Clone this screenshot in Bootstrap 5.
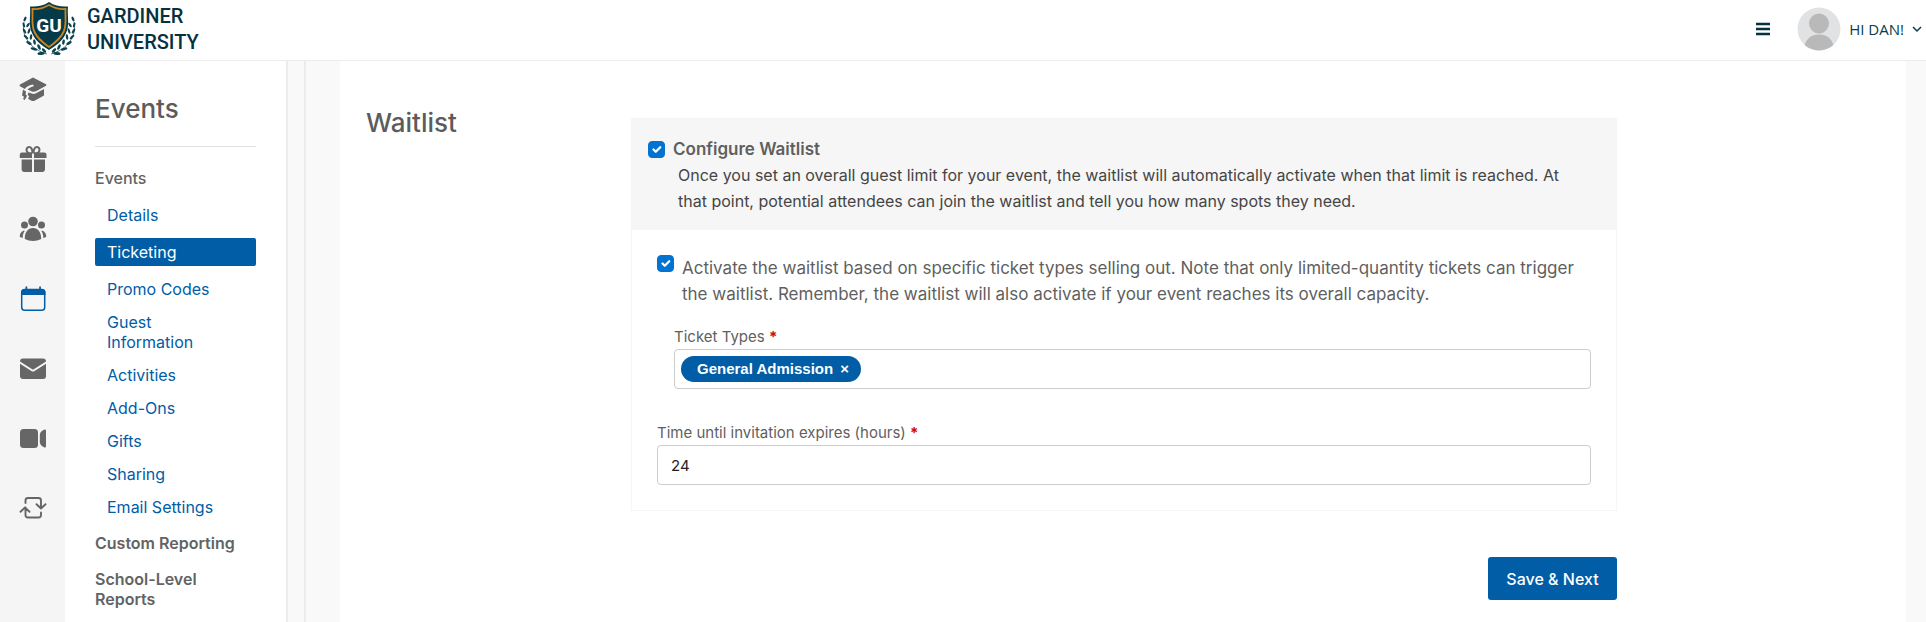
<!DOCTYPE html>
<html lang="en">
<head>
<meta charset="utf-8">
<meta name="viewport" content="width=device-width, initial-scale=1">
<title>Waitlist - Gardiner University</title>
<link href="https://cdn.jsdelivr.net/npm/bootstrap@5.3.0/dist/css/bootstrap.min.css" rel="stylesheet">
<style>
  body { font-family: Inter, "Liberation Sans", sans-serif; font-size: 16px; line-height: 20px; color: #5f5f5f; background: #fff; }
  a { text-decoration: none; }
  .topbar { height: 61px; border-bottom: 1px solid #ececec; padding: 0 4px 2px 22px; }
  .wordmark { font-family: Roboto, "Liberation Sans", sans-serif; font-size: 20px; font-weight: 500; line-height: 26px; color: #06323f; gap: 11px; }
  .wordmark:hover { color: #06323f; }
  .user-btn { font-family: "Open Sans", sans-serif; font-size: 15px; color: #0b3c49; }
  .shell { min-height: calc(100vh - 61px); background: #f9f9f9; }
  .rail { width: 65px; background: #f5f5f5; padding-top: 14px; gap: 42px; color: #666; }
  .rail a { color: inherit; height: 28px; }
  .rail a.current { color: #005da6; }
  .side { width: 223px; background: #fff; border-right: 2px solid #ececec; padding: 31px 30px 0; }
  .page-title { font-size: 26px; line-height: 34px; font-weight: 500; color: #5c5c5c; }
  .side hr { color: #e2e2e2; opacity: 1; margin: 20px 0 21px; }
  .side h2, .side-head { font-size: 16px; line-height: 20px; font-weight: 600; color: #636363; }
  .side h2 { font-weight: 500; margin-bottom: 13px; }
  .side .nav { margin-bottom: 12px; }
  .side .nav-link { color: #005da6; padding: 4px 32px 4px 12px; margin-bottom: 5px; border-radius: 2px; }
  .side .nav-link.active { background: #005da6; color: #fff; margin: 4px 0 9px; }
  .gutter { width: 18px; border-right: 2px solid #ececec; }
  .panel { margin: 0 20px 0 34px; padding: 45px 0 16px 26px; background: #fff; }
  .title-col { width: 265px; }
  .form-col { width: 64%; padding-top: 12px; }
  .option-card { border: 1px solid #f5f5f5; border-radius: 0; }
  .option-head { background: #f6f6f6; padding: 17px 32px 16px 16px; }
  .option-body { padding: 25px; }
  .form-check-input.tick { width: 17px; height: 17px; margin: 0; border-color: #0074d0; flex: none; border-radius: 4px; }
  .tick:checked { background-color: #0074d0; }
  .option-label { font-size: 17px; font-weight: 600; line-height: 26px; }
  .option-text { line-height: 26px; color: #454545; padding-left: 30px; }
  .activate-row { margin-bottom: 20px; }
  .activate-label { font-size: 17px; line-height: 26px; }
  .types-group { margin: 0 0 34px 17px; }
  .field-label { font-size: 15px; line-height: 20px; margin-bottom: 2px; }
  .req { color: #e00000; font-weight: 700; }
  .field, .field.form-control { height: 40px; border: 1px solid #ccc; border-radius: 4px; font-size: 15px; color: #222; padding: 0 13px; }
  .field.tags { padding: 0 6px; }
  .tag { height: 26px; border-radius: 13px; background: #005da6; color: #fff; font: bold 15px/26px "Liberation Sans", sans-serif; padding: 0 12px 0 16px; gap: 7px; }
  .tag button { color: inherit; font: inherit; }
  .form-actions { margin-top: 46px; }
  .btn-save { background: #005da6; color: #fff; border-radius: 3px; font-weight: 500; height: 43px; padding: 0 18px; }
  .btn-save:hover { background: #004f8e; color: #fff; }
</style>
</head>
<body>
<header class="topbar d-flex align-items-center justify-content-between">
  <a href="#" class="wordmark d-flex align-items-center">
    <svg width="54" height="56" viewBox="0 0 54 56" aria-hidden="true">
      <g id="laurel" fill="#0a4350">
        <path d="M2 21C-1 35 8 48 25 53" fill="none" stroke="#0a4350" stroke-width=".7"/>
        <ellipse cx="3" cy="18" rx="1.200" ry="2.600" transform="rotate(25 3 18)"/>
        <ellipse cx="1.800" cy="24" rx="1.100" ry="2.600" transform="rotate(-15 1.800 24)"/>
        <ellipse cx="6" cy="24" rx="1.100" ry="2.600" transform="rotate(35 6 24)"/>
        <ellipse cx="2.500" cy="30" rx="1.200" ry="2.800" transform="rotate(-30 2.500 30)"/>
        <ellipse cx="7" cy="30" rx="1.100" ry="2.800" transform="rotate(20 7 30)"/>
        <ellipse cx="4" cy="36" rx="1.200" ry="3" transform="rotate(-45 4 36)"/>
        <ellipse cx="9" cy="36" rx="1.200" ry="2.900" transform="rotate(8 9 36)"/>
        <ellipse cx="7" cy="42" rx="1.300" ry="3.100" transform="rotate(-60 7 42)"/>
        <ellipse cx="12.500" cy="41" rx="1.300" ry="2.900" transform="rotate(-10 12.500 41)"/>
        <ellipse cx="12" cy="48" rx="1.400" ry="3.400" transform="rotate(-75 12 48)"/>
        <ellipse cx="17" cy="46" rx="1.400" ry="3" transform="rotate(-25 17 46)"/>
        <ellipse cx="19" cy="52.500" rx="1.500" ry="3.600" transform="rotate(-95 19 52.500)"/>
        <ellipse cx="22" cy="49.500" rx="1.300" ry="2.800" transform="rotate(-45 22 49.500)"/>
      </g>
      <use href="#laurel" transform="translate(54 0) scale(-1 1)"/>
      <path d="M27 1C21 5 15 6 8 5.500C9 14 6 24 10 32C14 41 21 45 27 49C33 45 40 41 44 32C48 24 45 14 46 5.500C39 6 33 5 27 1Z" fill="#053b49"/>
      <path d="M27 4C21 7.500 16 8.500 10.500 8C11 16 9 24 12.500 31C16 38.500 21.500 42 27 46C32.500 42 38 38.500 41.500 31C45 24 43 16 43.500 8C38 8.500 33 7.500 27 4Z" fill="#053b49" stroke="#cc8420" stroke-width="1.800"/>
      <text x="27" y="31" text-anchor="middle" font-family="Roboto, Liberation Sans, sans-serif" font-weight="700" font-size="19" fill="#fff">GU</text>
    </svg>
    <span>GARDINER<br>UNIVERSITY</span>
  </a>
  <div class="d-flex align-items-center">
    <button type="button" class="btn p-0 border-0 d-flex me-4" aria-label="Menu">
      <svg width="20" height="14" viewBox="0 0 20 14"><path d="M3 2h14M3 7h14M3 12h14" stroke="#06323f" stroke-width="2.400"/></svg>
    </button>
    <button type="button" class="user-btn btn p-0 border-0 d-flex align-items-center">
      <svg class="me-2" width="44" height="44" viewBox="0 0 44 44" aria-hidden="true">
        <defs><clipPath id="face"><circle cx="22" cy="22" r="21.500"/></clipPath></defs>
        <g clip-path="url(#face)"><path d="M0 0h44v44H0z" fill="#e1e2e3"/><circle cx="22" cy="16.500" r="10" fill="#b9b9ba"/><path d="M7 44c0-11 6-16.500 15-16.500S37 33 37 44z" fill="#b9b9ba"/></g>
      </svg>
      <span>HI DAN!</span>
      <svg class="ms-2" width="10" height="8" viewBox="0 0 10 8" aria-hidden="true"><path d="M1 2l4 4 4-4" fill="none" stroke="#0b3c49" stroke-width="1.500"/></svg>
    </button>
  </div>
</header>

<div class="shell d-flex">
  <nav class="rail d-flex flex-column align-items-center flex-shrink-0" aria-label="Modules">
    <a href="#" aria-label="Academics"><svg width="28" height="28" viewBox="0 0 28 28"><path fill="currentColor" d="M14 2.500L27 9.200q1 .8 0 1.600L17 16.200q-2 .8-4 .2L8.500 14.600C10.500 12.600 12 12 15 11l-1.200-1.400C10 10.500 7 12 5.800 14L1 11.200q-1-.8 0-1.600zM9.500 17.400l4 1.400q1.500.4 3-.3l8.500-4.600v6.600L15.500 25.700q-1.500.6-3 0L9 23.700l1.200-2.400-1.600-1.500zM4 14.500l3 2-.4 3 1.500 1.300L5.800 25l-1.700-1 .9-2.200-2-1.300z"/></svg></a>
    <a href="#" aria-label="Giving"><svg width="28" height="28" viewBox="0 0 28 28"><path fill="none" stroke="currentColor" stroke-width="2" d="M13 8.500C6 9 6.500 2 10 2c2.500 0 3.500 3 3.500 6.500M15 8.500c7 .5 6.500-6.500 3-6.500-2.500 0-3.500 3-3.500 6.500"/><path fill="currentColor" d="M3 7.500h10v5.500H.8V9.700q0-2.200 2.200-2.200zM15 7.500h10.500q2 0 2 2.200V13H15zM2.600 14.500H13V27H5q-2.400 0-2.400-2.400zM15 14.500h11v10.100Q26 27 23.600 27H15z"/></svg></a>
    <a href="#" aria-label="People"><svg width="28" height="28" viewBox="0 0 28 28"><g fill="currentColor"><circle cx="14" cy="6.500" r="4.800"/><circle cx="5.500" cy="10" r="3.500"/><circle cx="22.500" cy="10" r="3.500"/><path d="M5.800 24c0-7 3-11 8.200-11s8.200 4 8.200 11q-3.800 2-8.200 2t-8.200-2zM5 15.500C2 16.500.6 19 .8 22l2.900 1c0-3 .5-5 2-7zM23 15.500c3 1 4.400 3.500 4.200 6.500l-2.900 1c0-3-.5-5-2-7z"/></g></svg></a>
    <a href="#" class="current" aria-label="Events"><svg width="28" height="28" viewBox="0 0 28 28"><rect x="2.700" y="4.500" width="23" height="20.700" rx="3" fill="none" stroke="currentColor" stroke-width="1.500"/><path fill="currentColor" d="M2 10V6.500Q2.500 4 5 4H6.500V1.500h1.700V4h12V1.500h1.700V4h1.600q2.500 0 3 2.500V10z"/></svg></a>
    <a href="#" aria-label="Email"><svg width="28" height="28" viewBox="0 0 28 28"><path fill="currentColor" d="M4 3.500h20q3 0 3 3L14 14.700 1 6.500q0-3 3-3zM1 8.700l11.800 7.500q1.200.7 2.400 0L27 8.700V21q0 3-3 3H4q-3 0-3-3z"/></svg></a>
    <a href="#" aria-label="Video"><svg width="28" height="28" viewBox="0 0 28 28"><rect x="1" y="4" width="18" height="19" rx="3.500" fill="currentColor"/><path fill="currentColor" d="M20.800 10q0-2.500 2-4l2.200-1.300q2-.8 2 1v15.600q0 1.800-2 1L22.800 21q-2-1.500-2-4z"/></svg></a>
    <a href="#" aria-label="Sync"><svg width="28" height="28" viewBox="0 0 28 28" fill="none" stroke="currentColor" stroke-width="1.900" stroke-linecap="round" stroke-linejoin="round"><path d="M6.500 8V5.500q0-2.500 2.500-2.500h10.500q2.500 0 2.500 2.500v7.500M17.500 9.200l4.500 4.300 4.500-4.300M22 17.500v2.500q0 2.500-2.500 2.500H9q-2.500 0-2.500-2.500v-7.500M1.500 16.800L6 12.500l4.500 4.300"/></svg></a>
  </nav>

  <aside class="side flex-shrink-0">
    <h1 class="page-title mb-0">Events</h1>
    <hr>
    <h2>Events</h2>
    <nav class="nav flex-column">
      <a class="nav-link" href="#">Details</a>
      <a class="nav-link active" href="#" aria-current="page">Ticketing</a>
      <a class="nav-link" href="#">Promo Codes</a>
      <a class="nav-link" href="#">Guest Information</a>
      <a class="nav-link" href="#">Activities</a>
      <a class="nav-link" href="#">Add-Ons</a>
      <a class="nav-link" href="#">Gifts</a>
      <a class="nav-link" href="#">Sharing</a>
      <a class="nav-link mb-0" href="#">Email Settings</a>
    </nav>
    <a class="side-head d-block mb-3" href="#">Custom Reporting</a>
    <a class="side-head d-block" href="#">School-Level Reports</a>
  </aside>
  <div class="gutter flex-shrink-0"></div>

  <main class="panel flex-grow-1">
    <form class="d-flex" onsubmit="return false">
      <div class="title-col flex-shrink-0"><h2 class="page-title m-0">Waitlist</h2></div>
      <div class="form-col">
        <section class="option-card">
          <div class="option-head">
            <div class="d-flex align-items-center gap-2">
              <input class="form-check-input tick" type="checkbox" id="configure" checked>
              <label class="option-label" for="configure">Configure Waitlist</label>
            </div>
            <p class="option-text mb-0">Once you set an overall guest limit for your event, the waitlist will automatically activate when that limit is reached. At that point, potential attendees can join the waitlist and tell you how many spots they need.</p>
          </div>
          <div class="option-body">
            <div class="activate-row d-flex gap-2">
              <input class="form-check-input tick" type="checkbox" id="activate" checked>
              <label class="activate-label" for="activate">Activate the waitlist based on specific ticket types selling out. Note that only limited-quantity tickets can trigger the waitlist. Remember, the waitlist will also activate if your event reaches its overall capacity.</label>
            </div>
            <div class="types-group">
              <div class="field-label" id="types-label">Ticket Types <span class="req">*</span></div>
              <div class="field tags d-flex align-items-center bg-white" role="group" aria-labelledby="types-label">
                <span class="tag d-flex">General Admission <button type="button" class="btn p-0 border-0" aria-label="Remove General Admission">×</button></span>
              </div>
            </div>
            <label class="field-label d-block" for="hours">Time until invitation expires (hours) <span class="req">*</span></label>
            <input class="form-control field" type="text" id="hours" value="24">
          </div>
        </section>
        <div class="form-actions d-flex justify-content-end"><button type="submit" class="btn btn-save border-0">Save &amp; Next</button></div>
      </div>
    </form>
  </main>
</div>
<script src="https://cdn.jsdelivr.net/npm/bootstrap@5.3.0/dist/js/bootstrap.bundle.min.js"></script>
</body>
</html>
